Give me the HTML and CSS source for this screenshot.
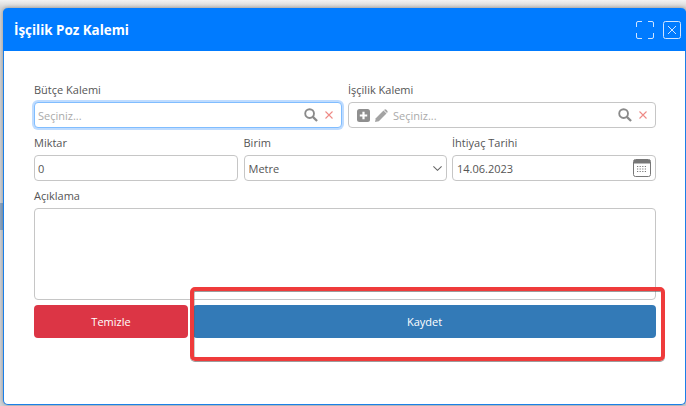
FILE: index.html
```html
<!DOCTYPE html>
<html lang="tr">
<head>
<meta charset="utf-8">
<title>İşçilik Poz Kalemi</title>
<link rel="stylesheet" href="styles.css">
</head>
<body>
<section class="modal">
  <header class="modal-head">
    <h1 class="modal-title">İşçilik Poz Kalemi</h1>
    <div class="modal-tools">
      <svg class="tool" width="18" height="18" viewBox="0 0 18 18" fill="none" stroke="#cfe4ff" stroke-width="1">
        <path d="M.5 6V2Q.5.5 2 .5H6M12 .5H16Q17.500.5 17.500 2V6M17.500 12V16Q17.500 17.500 16 17.500H12M6 17.500H2Q.5 17.500 .5 16V12"/>
      </svg>
      <svg class="tool" width="18" height="18" viewBox="0 0 18 18" fill="none" stroke="#cfe4ff" stroke-width="1">
        <rect x=".5" y=".5" width="17" height="17" rx="2"/>
        <path d="M5 5l8 8M13 5l-8 8"/>
      </svg>
    </div>
  </header>
  <form class="modal-body">
    <div class="row row-two">
      <div class="field">
        <label class="label">Bütçe Kalemi</label>
        <div class="control focused">
          <input class="bare" type="text" placeholder="Seçiniz...">
          <svg class="ico-search" width="14" height="14" viewBox="0 0 15 15" fill="none" stroke="#8a8a8a"><circle cx="6" cy="6" r="4.700" stroke-width="2"/><path d="M9.500 9.500l4.500 4.500" stroke-width="2.400"/></svg>
          <svg class="ico-x" width="8" height="8" viewBox="0 0 8 8" fill="none" stroke="#ee8a86" stroke-width="1.100"><path d="M.5.5l7 7M7.500.5l-7 7"/></svg>
        </div>
      </div>
      <div class="field">
        <label class="label">İşçilik Kalemi</label>
        <div class="control control-tools">
          <svg class="ico-plus" width="13" height="13" viewBox="0 0 13 13"><rect width="13" height="13" rx="2.500" fill="#8f8f8f"/><path d="M6.500 2.800v7.400M2.800 6.500h7.400" stroke="#fff" stroke-width="2.200"/></svg>
          <svg class="ico-pen" width="13" height="13" viewBox="0 0 13 13" fill="#a3a3a3"><path d="M0 13l.8-3.800L8.500 1.500l3 3L3.800 12.200z"/><path d="M9.300.8q1-.9 2 0l.9.900q.9 1 0 2l-.2.200-3-3z"/></svg>
          <input class="bare" type="text" placeholder="Seçiniz...">
          <svg class="ico-search" width="14" height="14" viewBox="0 0 15 15" fill="none" stroke="#8a8a8a"><circle cx="6" cy="6" r="4.700" stroke-width="2"/><path d="M9.500 9.500l4.500 4.500" stroke-width="2.400"/></svg>
          <svg class="ico-x" width="8" height="8" viewBox="0 0 8 8" fill="none" stroke="#ee8a86" stroke-width="1.100"><path d="M.5.5l7 7M7.500.5l-7 7"/></svg>
        </div>
      </div>
    </div>
    <div class="row row-three">
      <div class="field">
        <label class="label">Miktar</label>
        <div class="control"><input class="bare" type="text" value="0"></div>
      </div>
      <div class="field">
        <label class="label">Birim</label>
        <div class="control control-select">
          <select class="bare select"><option>Metre</option></select>
          <svg class="ico-chev" width="9" height="5" viewBox="0 0 9 5" fill="none" stroke="#666" stroke-width="1.100"><path d="M.4.400L4.500 4.300 8.600.4"/></svg>
        </div>
      </div>
      <div class="field">
        <label class="label">İhtiyaç Tarihi</label>
        <div class="control control-date">
          <input class="bare" type="text" value="14.06.2023">
          <svg class="ico-cal" width="18" height="18" viewBox="0 0 18 18">
            <rect x=".5" y=".5" width="17" height="17" rx="2" fill="#fff" stroke="#777"/>
            <path d="M1 1h16v3.500H1z" fill="#777"/>
            <path d="M4 7.500h10M4 10h10M4 12.500h10" stroke="#777" stroke-width="1.200" stroke-dasharray="1.200 1.400"/>
          </svg>
        </div>
      </div>
    </div>
    <div class="field">
      <label class="label">Açıklama</label>
      <textarea class="area"></textarea>
    </div>
    <div class="actions">
      <button class="btn btn-clear" type="button">Temizle</button>
      <button class="btn btn-save" type="button">Kaydet</button>
    </div>
  </form>
  <div class="callout"></div>
</section>
</body>
</html>
```
FILE: styles.css
```css
* { box-sizing: border-box; }
html, body { margin: 0; height: 100%; }
body {
  overflow: hidden;
  padding: 8px 0 1px 3px;
  background: linear-gradient(#f2f2f2 0, #d4d4d4 8px, #d2d4d8 203px, #8fa9c6 203px, #8fa9c6 230px, #d2d4d8 230px);
  font-family: "Open Sans", "Noto Sans", sans-serif;
  font-size: 11px;
  color: #444;
}
.modal {
  position: relative;
  width: 683px;
  height: 397px;
  background: #fff;
  border: 1px solid #1a7fe8;
  border-top: 0;
  border-radius: 5px;
  box-shadow: 0 0 4px rgba(0, 0, 0, .35);
}
.modal-head {
  height: 43px;
  margin: 0 -1px;
  padding: 1px 5px 0 11px;
  display: flex;
  align-items: center;
  justify-content: space-between;
  background: #007bff;
  border-radius: 5px 5px 0 0;
}
.modal-title {
  margin: 0;
  font-size: 13.400px;
  font-weight: 700;
  color: #fff;
}
.modal-tools { display: flex; align-items: center; gap: 9px; }
.tool { display: block; }
.modal-body {
  padding: 24px 29px 0 30px;
  display: flex;
  flex-direction: column;
}
.row { display: grid; }
.row-two { grid-template-columns: 1fr 1fr; gap: 6px; }
.row-three { grid-template-columns: 204px 203px 204px; justify-content: space-between; }
.field { display: flex; flex-direction: column; min-width: 0; }
.label {
  height: 27px;
  padding-top: 7px;
  line-height: 16px;
  color: #555;
}
.control {
  height: 26px;
  padding: 0 8px 0 3px;
  display: flex;
  align-items: center;
  gap: 7px;
  background: #fff;
  border: 1px solid #c6c6c6;
  border-radius: 4px;
}
.focused {
  border-color: #80bdff;
  box-shadow: 0 0 0 2px #bfdcff;
}
.control-tools { padding-left: 8px; gap: 5px; }
.control-tools .ico-x { margin-left: 2px; }
.control-select { padding: 0 4px; }
.control-date { padding: 0 4px 0 4px; }
.bare {
  flex: 1;
  min-width: 0;
  height: 100%;
  padding: 0;
  border: 0;
  outline: 0;
  background: transparent;
  font: inherit;
  color: #555;
  appearance: none;
}
.bare::placeholder { color: #aaa; opacity: 1; }
.ico-plus, .ico-pen, .ico-search, .ico-x, .ico-chev, .ico-cal { flex: none; display: block; }
.area {
  height: 92px;
  display: block;
  resize: none;
  border: 1px solid #c6c6c6;
  border-radius: 4px;
  background: #fff;
  outline: 0;
}
.actions {
  margin-top: 5px;
  display: grid;
  grid-template-columns: 154px 1fr;
  gap: 5px;
}
.btn {
  height: 33px;
  padding: 0;
  border: 0;
  border-radius: 4px;
  font: 500 11px "Open Sans", "Noto Sans", sans-serif;
  color: #fff;
}
.btn-clear { background: #dc3545; }
.btn-save { background: #337ab7; }
.callout {
  position: absolute;
  left: 186px;
  top: 279px;
  width: 475px;
  height: 74px;
  border: 4px solid #ef3b3b;
  border-radius: 5px;
  box-shadow: inset 0 1px 0 rgba(90, 90, 90, .6), inset 1px 0 0 rgba(90, 90, 90, .3), 0 1px 0 rgba(90, 90, 90, .6);
}
```
